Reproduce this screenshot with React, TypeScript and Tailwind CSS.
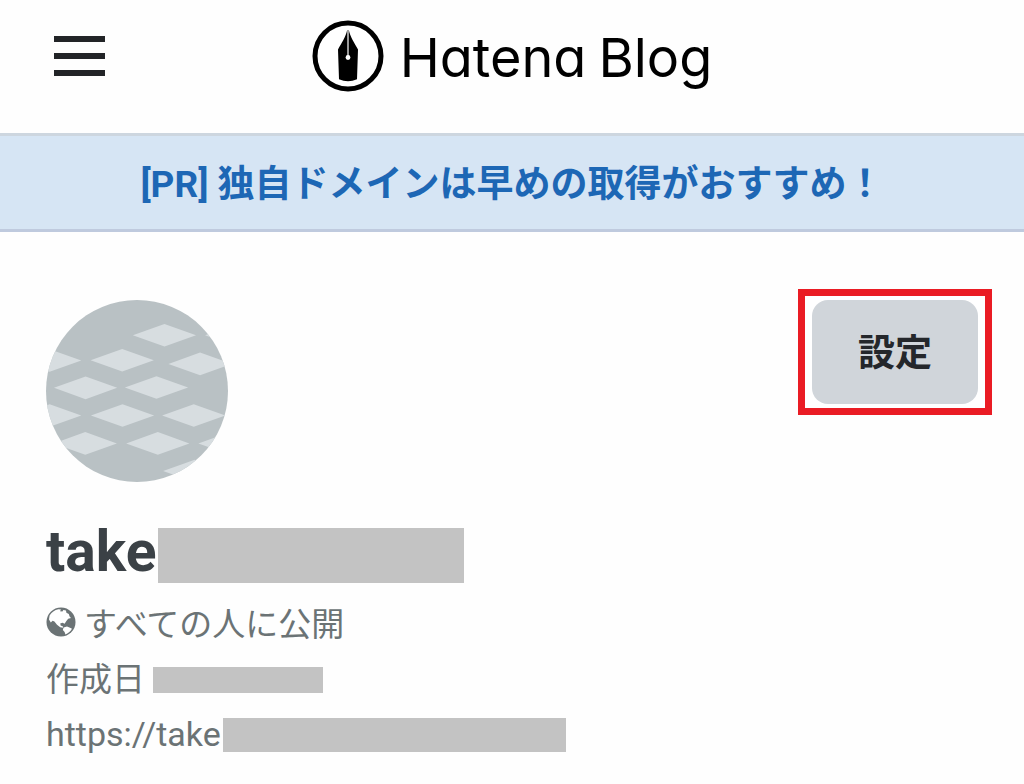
import React from 'react';

const diamonds = [
  [387, 136],
  [604, 136],
  [42, 212],
  [260, 211],
  [494, 222],
  [150, 294],
  [363, 293],
  [42, 377],
  [261, 377],
  [475, 377],
  [149, 461],
  [367, 461],
  [584, 461],
  [478, 544],
];

const PenMark: React.FC = () => (
  <svg viewBox="0 0 72 72" className="size-18" aria-hidden="true">
    <circle cx="36" cy="36" r="33" fill="#fff" stroke="#000" strokeWidth="5" />
    <path
      d="M35.2 10C33.8 17 29.5 23 26 29.4L27 59.2Q36 63.4 45 59.2L46 29.4C42.5 23 38.2 17 36.8 10Z"
      fill="#000"
    />
    <path d="M36 9V37" stroke="#fff" strokeWidth="1.2" />
    <circle cx="36" cy="37.5" r="2.4" fill="#fff" />
  </svg>
);

const Avatar: React.FC = () => (
  <svg viewBox="0 0 547 547" className="size-[182px] rounded-full bg-[#b9c1c4]" role="img" aria-label="take">
    <g transform="translate(-31 -30)" fill="#d7dde0">
      {diamonds.map(([x, y]) => (
        <path key={`${x}-${y}`} d={`M${x - 95} ${y}L${x} ${y - 34}L${x + 95} ${y}L${x} ${y + 34}Z`} />
      ))}
    </g>
  </svg>
);

const Globe: React.FC = () => (
  <svg viewBox="0 0 30 30" className="mb-1.5 size-[30px]" aria-hidden="true">
    <circle cx="15" cy="15" r="14.5" fill="#6b7375" />
    <g fill="#fff">
      <path d="M3.6 8.4C5.6 5.2 8.6 3 12.4 2.2L15 2.4L14 4.2L16.4 4.6L17.4 3L20 3.6L20.4 5.8L22.8 7L23.6 9.4L25 11L22.2 11.8L20.4 14L18.6 16.8L16.6 15.8L14.2 16.6L14.8 18.8L16.6 19L17 20.8L14.2 20.2L11 17.8L8.4 14.6L6.6 13.8L4.8 15.4L3 12.6Z" />
      <path d="M17.6 20.6L21 19.4L24.6 21L26 21.8C24.4 24.6 22 26.4 19.4 27.4L18.6 25L16.8 23Z" />
    </g>
  </svg>
);

export default function App() {
  return (
    <div className="min-h-screen bg-[#fefefe] pb-6 font-[Roboto,'Noto_Sans_CJK_JP',sans-serif]">
      <header className="grid grid-cols-[1fr_auto_1fr] items-center px-[54px] pt-5 pb-[41px]">
        <button type="button" aria-label="メニュー" className="flex w-[51px] flex-col gap-[11px]">
          <span className="h-1.5 bg-[#222427]" />
          <span className="h-1.5 bg-[#222427]" />
          <span className="h-1.5 bg-[#222427]" />
        </button>
        <a href="#" className="flex items-center gap-4 text-black">
          <PenMark />
          <span className="flex gap-3 pt-1 font-[Inter,sans-serif] text-[54px] leading-[68px] font-normal [font-feature-settings:'cv11','ss03']">
            <span>Hatena</span>
            <span>Blog</span>
          </span>
        </a>
      </header>

      <a
        href="#"
        className="block border-y-3 border-t-[#cdd6df] border-b-[#bfcade] bg-[#d6e5f4] pt-[22px] pb-[18px] text-center text-[37px] leading-[53px] font-bold text-[#1d67b5]"
      >
        [PR] 独自ドメインは早めの取得がおすすめ！
      </a>

      <main className="pr-8 pl-[46px]">
        <div className="flex items-start justify-between pt-[57px]">
          <div className="pt-[11px]">
            <Avatar />
          </div>
          <div className="border-7 border-[#ea1c24] bg-white px-[7px] py-1">
            <button
              type="button"
              className="h-26 w-[166px] rounded-2xl bg-[#d0d5da] pt-1 text-[37px] font-bold text-[#24272b]"
            >
              設定
            </button>
          </div>
        </div>

        <h1 className="mt-[38px] flex items-center gap-0.5 text-[57px] leading-[64px] font-bold text-[#3b4146]">
          take
          <span className="mt-1.5 h-[55px] w-[306px] bg-[#c3c3c3]" />
        </h1>

        <div className="mt-[13px] text-[33px] leading-[55px] text-[#6b7375]">
          <p className="flex items-center gap-2">
            <Globe />
            すべての人に公開
          </p>
          <p className="flex items-center gap-2">
            作成日
            <span className="h-[26px] w-[170px] bg-[#c3c3c3]" />
          </p>
          <p className="flex items-center gap-0.5 text-[34px]">
            <a href="#">https://take</a>
            <span className="h-[34px] w-[343px] bg-[#c3c3c3]" />
          </p>
        </div>
      </main>
    </div>
  );
}
